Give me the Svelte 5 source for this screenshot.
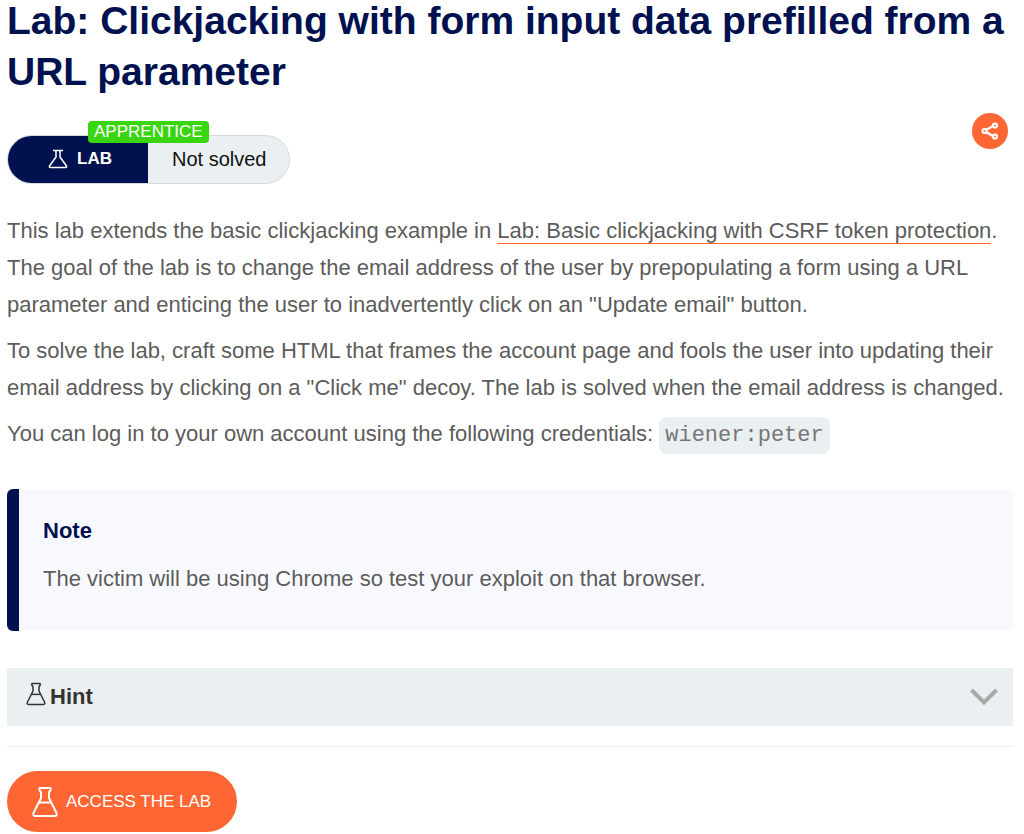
<script>
	const title = 'Lab: Clickjacking with form input data prefilled from a URL parameter';

	let hintOpen = $state(false);
</script>

{#snippet flask(size, stroke)}
	<svg class="flask" width={size} height={size} viewBox="0 0 32 32" fill="none" stroke="currentColor" stroke-width={stroke} stroke-linejoin="round" aria-hidden="true">
		<path d="M10.500 2h11v2.500l-1.500 1.500v6l7.500 15q1 3-2 3h-19q-3 0-2-3L12 12V6l-1.500-1.500z" />
		<path d="M9.500 16.500h13" />
	</svg>
{/snippet}

<main>
	<h1>{title}</h1>

	<div class="status-row">
		<div class="status">
			<span class="kind">
				<svg width="20" height="20" viewBox="0 0 20 20" fill="none" stroke="currentColor" stroke-width="1.500" stroke-linejoin="round" aria-hidden="true">
					<path d="M5 1.500h10M8 2v6L1.500 17q-.5 1.500 1 1.500h15q1.500 0 1-1.500L12 8V2" />
				</svg>
				LAB
			</span>
			<span class="state">Not solved</span>
			<span class="level">APPRENTICE</span>
		</div>

		<button class="share" type="button" aria-label="Share">
			<svg width="18" height="18" viewBox="0 0 18 18" fill="none" stroke="currentColor" stroke-width="2.200" aria-hidden="true">
				<path d="M5 8l7-4M5 10l7 4" />
				<circle cx="3.500" cy="9" r="2" />
				<circle cx="14" cy="3.500" r="2" />
				<circle cx="14" cy="14.500" r="2" />
			</svg>
		</button>
	</div>

	<div class="description">
		<p>
			This lab extends the basic clickjacking example in <a href="#csrf-token-protection">Lab: Basic clickjacking with CSRF token protection</a>. The goal of the lab is to change the email address of the user by prepopulating a form using a URL parameter and enticing the user to inadvertently click on an "Update email" button.
		</p>
		<p>
			To solve the lab, craft some HTML that frames the account page and fools the user into updating their email address by clicking on a "Click me" decoy. The lab is solved when the email address is changed.
		</p>
		<p>
			You can log in to your own account using the following credentials: <code>wiener:peter</code>
		</p>
	</div>

	<section class="note">
		<h2>Note</h2>
		<p>The victim will be using Chrome so test your exploit on that browser.</p>
	</section>

	<button class="hint" class:open={hintOpen} type="button" aria-expanded={hintOpen} onclick={() => (hintOpen = !hintOpen)}>
		{@render flask(24, 2)}
		<span>Hint</span>
		<svg class="chevron" width="28" height="18" viewBox="0 0 28 18" fill="none" stroke="currentColor" stroke-width="4" aria-hidden="true">
			<path d="M1.500 2L14 14.500L26.500 2" />
		</svg>
	</button>

	<hr />

	<a class="access" href="#launch">
		{@render flask(32, 2)}
		<span>ACCESS THE LAB</span>
	</a>
</main>

<style>
	:global(body) {
		margin: 0;
		background: #fff;
	}

	main {
		padding: 0 11px 0 7px;
		overflow: hidden;
		color: #5c5c5b;
		font-family: 'Liberation Sans', Arial, sans-serif;
		font-size: 22px;
		line-height: 37px;
	}

	h1 {
		margin: -5px 0 0;
		color: #00114f;
		font-size: 39px;
		line-height: 51px;
	}

	.status-row {
		display: flex;
		justify-content: space-between;
		align-items: flex-start;
		margin-top: 16px;
	}

	.status {
		position: relative;
		display: flex;
		box-sizing: border-box;
		height: 49px;
		margin-top: 22px;
		border: 1px solid #d5dadd;
		border-radius: 25px;
		background: #eaeff2;
		line-height: 46px;
	}

	.kind {
		display: flex;
		align-items: center;
		gap: 9px;
		padding: 0 36px 2px 40px;
		border-radius: 24px 0 0 24px;
		background: #00114f;
		color: #fff;
		font-size: 17px;
		font-weight: 700;
	}

	.state {
		padding: 0 23px 0 24px;
		color: #111;
		font-size: 20px;
	}

	.level {
		position: absolute;
		top: -15px;
		left: 80px;
		padding: 0 6px;
		border-radius: 4px;
		background: #39d60f;
		color: #fff;
		font-size: 17px;
		line-height: 22px;
	}

	.share {
		display: grid;
		place-items: center;
		width: 36px;
		height: 36px;
		margin-right: 5px;
		padding: 0;
		border: 0;
		border-radius: 50%;
		background: #f63;
		color: #fff;
		cursor: pointer;
	}

	.description {
		margin-top: 28px;
	}

	p {
		margin: 0;
	}

	.description p + p {
		margin-top: 9px;
	}

	.description a {
		border-bottom: 1px solid #f63;
		color: inherit;
		text-decoration: none;
	}

	code {
		display: inline-block;
		padding: 0 6px;
		border-radius: 8px;
		background: #eaeff2;
		color: #777;
		font-family: 'Liberation Mono', 'Courier New', monospace;
		font-size: 22px;
	}

	.note {
		margin-top: 35px;
		padding: 23px 24px 34px;
		border-left: 12px solid #00114f;
		border-radius: 6px;
		background: #f8f9fe;
	}

	h2 {
		margin: 0 0 11px;
		color: #00114f;
		font-size: 22px;
		line-height: 37px;
	}

	.hint {
		display: flex;
		align-items: center;
		gap: 2px;
		width: 100%;
		height: 58px;
		margin-top: 37px;
		padding: 0 15px 1px 17px;
		border: 0;
		background: #eaeff2;
		color: #333332;
		font: inherit;
		font-weight: 700;
		cursor: pointer;
	}

	.hint .flask {
		margin-bottom: 6px;
	}

	.chevron {
		margin-left: auto;
		color: #aaa;
	}

	.open .chevron {
		transform: rotate(180deg);
	}

	hr {
		margin: 20px 0 24px;
		border: 0;
		border-top: 1px solid #eee;
	}

	.access {
		display: inline-flex;
		align-items: center;
		gap: 5px;
		height: 61px;
		padding: 0 26px 0 22px;
		border-radius: 31px;
		background: #f63;
		color: #fff;
		font-size: 17px;
		text-decoration: none;
	}
</style>
